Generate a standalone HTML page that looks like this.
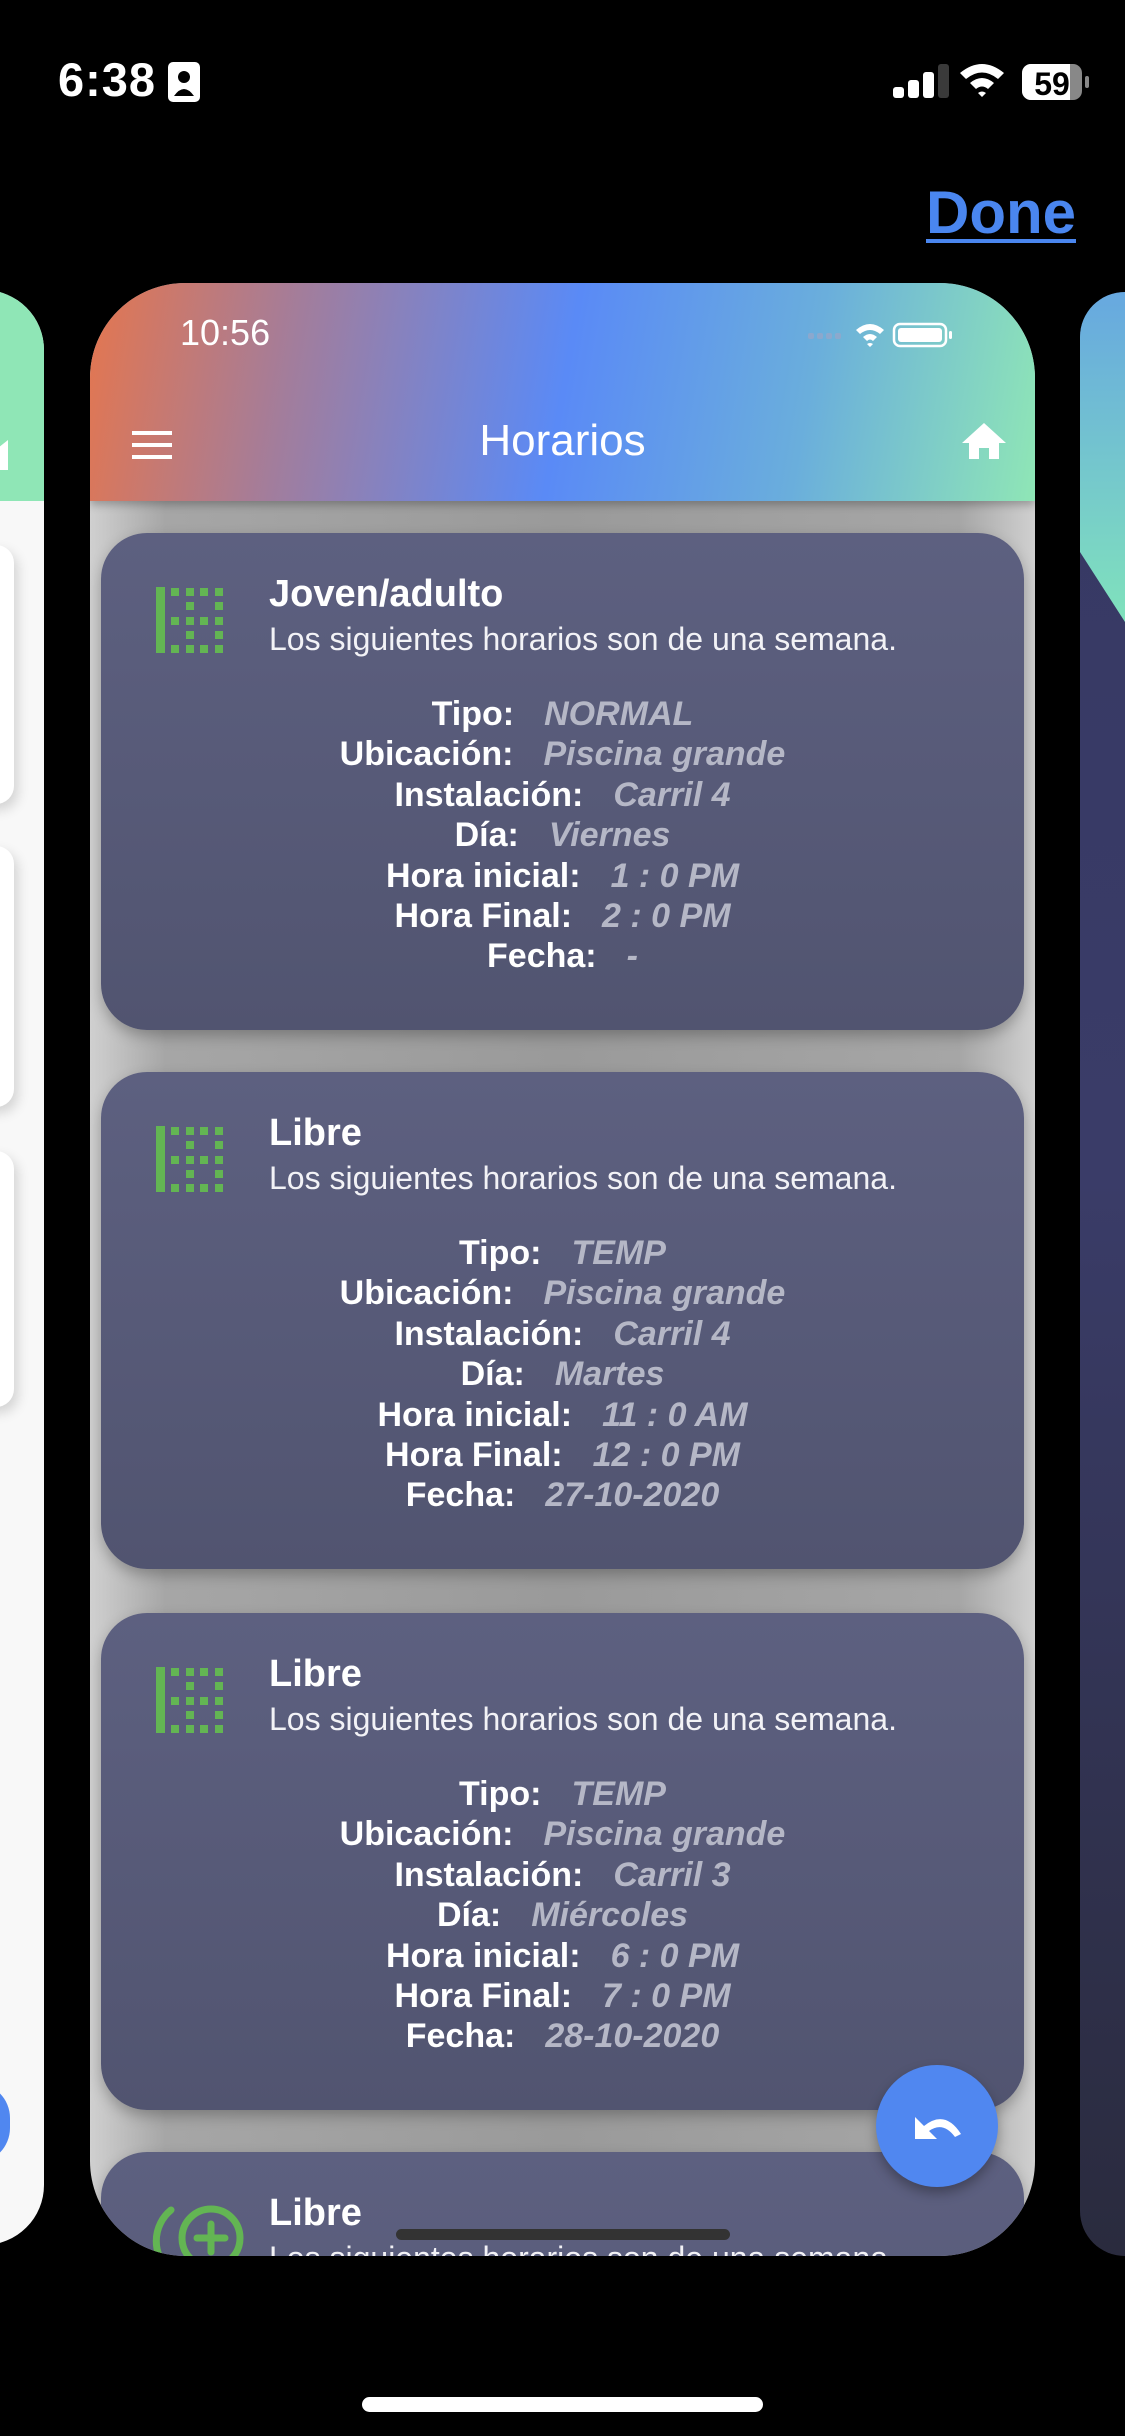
<!DOCTYPE html>
<html><head><meta charset="utf-8"><style>
*{margin:0;padding:0;box-sizing:border-box}
html{width:1125px;height:2436px;overflow:hidden}
body{width:1125px;height:2436px;background:#000;position:relative;overflow:hidden;font-family:"Liberation Sans",sans-serif;color:#fff}
.abs{position:absolute}
.main{left:90px;top:283px;width:945px;height:1973px;border-radius:95px;overflow:hidden;background:linear-gradient(90deg,#d0d0d0 0,#a6a6a6 8%,#9a9a9a 50%,#a6a6a6 92%,#d0d0d0 100%)}
.hdr{left:0;top:0;width:945px;height:218px;background:linear-gradient(100deg,#e4764f 0%,#a27d9c 22%,#5a8af6 50%,#6aaedc 75%,#8fe6b6 100%);box-shadow:0 4px 8px rgba(0,0,0,.25)}
.card{left:11px;width:923px;height:497px;border-radius:46px;background:linear-gradient(180deg,#5d6080,#515470);box-shadow:0 6px 14px rgba(0,0,0,.25)}
.title{left:168px;top:40px;font-size:38px;font-weight:bold}
.sub{left:168px;top:88px;font-size:32px;color:#f2f2f6}
.rows{left:0;top:161px;width:923px;text-align:center;font-size:34px;font-weight:bold;line-height:40.4px}
.rows i{color:#b5b7c6;margin-left:30px}
.icon{left:55px;top:54px}
</style></head><body>
<div class="abs" style="left:58px;top:52px;font-size:47px;font-weight:bold;letter-spacing:1px">6:38</div>
<svg class="abs" style="left:168px;top:62px" width="32" height="40"><rect x="0" y="0" width="32" height="40" rx="5" fill="#fff"/><circle cx="16" cy="15" r="6" fill="#000"/><path d="M6 34 Q16 20 26 34Z" fill="#000"/></svg>
<svg class="abs" style="left:890px;top:60px" width="200" height="50">
<rect x="3" y="27" width="11" height="11" rx="3" fill="#fff"/><rect x="18" y="20" width="11" height="18" rx="3" fill="#fff"/><rect x="33" y="12" width="11" height="26" rx="3" fill="#fff"/><rect x="48" y="4" width="11" height="34" rx="3" fill="#3a3a3a"/>
<path d="M70 13 Q92 -5 114 13 L108 19 Q92 6 76 19Z M80 23 Q92 13 104 23 L98 29 Q92 24 86 29Z M88 33 L92 37 L96 33 Q92 30 88 33Z" fill="#fff"/>
<rect x="132" y="4" width="60" height="36" rx="9" fill="#888"/><path d="M141 4 H180 V40 H141 A9 9 0 0 1 132 31 V13 A9 9 0 0 1 141 4Z" fill="#fff"/><rect x="195" y="16" width="4" height="12" rx="2" fill="#888"/>
<text x="162" y="35" font-size="32" font-weight="bold" font-family="Liberation Sans" text-anchor="middle" fill="#000">59</text></svg>
<div class="abs" style="left:926px;top:178px;font-size:60px;font-weight:bold;color:#4a86ef;text-decoration:underline;text-decoration-thickness:4px;text-underline-offset:6px">Done</div>

<div class="abs" style="left:-60px;top:290px;width:104px;height:1955px;border-radius:0 60px 60px 0;overflow:hidden;background:#f8f8f8">
<div class="abs" style="left:0;top:0;width:104px;height:211px;background:#8fe6b6"></div>
<svg class="abs" style="left:58px;top:150px" width="20" height="30"><path d="M0 8 L10 0 L10 30 L0 30Z" fill="#fff"/></svg>
<div class="abs" style="left:0;top:255px;width:74px;height:259px;background:#fff;border-radius:0 18px 18px 0;box-shadow:4px 6px 12px rgba(0,0,0,.15)"></div>
<div class="abs" style="left:0;top:556px;width:74px;height:261px;background:#fff;border-radius:0 18px 18px 0;box-shadow:4px 6px 12px rgba(0,0,0,.15)"></div>
<div class="abs" style="left:0;top:861px;width:74px;height:256px;background:#fff;border-radius:0 18px 18px 0;box-shadow:4px 6px 12px rgba(0,0,0,.15)"></div>
<div class="abs" style="left:0;top:1793px;width:70px;height:80px;border-radius:40px;background:#5087f0"></div>
</div>

<div class="abs" style="left:1080px;top:292px;width:45px;height:1964px;border-radius:60px 0 0 60px;overflow:hidden;background:linear-gradient(180deg,#363863 0%,#3a3c68 45%,#2a2b3e 100%)">
<svg class="abs" style="left:0;top:0" width="45" height="340"><defs><linearGradient id="tg" x1="0" y1="0" x2="0" y2="1"><stop offset="0" stop-color="#67a8e0"/><stop offset="1" stop-color="#80e2bc"/></linearGradient></defs><path d="M0 0 H45 V330 L0 260Z" fill="url(#tg)"/></svg>
</div>

<div class="abs main">
<div class="abs hdr"></div>
<div class="abs" style="left:90px;top:29px;font-size:36px">10:56</div>
<svg class="abs" style="left:718px;top:38px" width="180" height="30">
<g fill="#9aa6c8" opacity=".7"><rect x="0" y="12" width="6" height="6" rx="2"/><rect x="9" y="12" width="6" height="6" rx="2"/><rect x="18" y="12" width="6" height="6" rx="2"/><rect x="27" y="12" width="6" height="6" rx="2"/></g>
<path d="M48 9 Q62 -3 76 9 L72 13 Q62 5 52 13Z M55 16 Q62 10 69 16 L65 20 Q62 17 59 20Z M59 23 L62 26 L65 23 Q62 21 59 23Z" fill="#fff"/>
<rect x="86" y="3" width="52" height="22" rx="6" fill="none" stroke="#fff" stroke-width="2.5"/><rect x="90" y="7" width="44" height="14" rx="3" fill="#fff"/><rect x="141" y="10" width="3" height="8" rx="1.5" fill="#fff"/></svg>
<div class="abs" style="left:42px;top:148px;width:40px;height:4px;background:#fff;box-shadow:0 12px 0 #fff,0 24px 0 #fff"></div>
<div class="abs" style="left:0;top:133px;width:945px;text-align:center;font-size:44px">Horarios</div>
<svg class="abs" style="left:871px;top:138px" width="46" height="40"><path d="M23 2 L45 22 H38 V38 H28 V27 H18 V38 H8 V22 H1Z" fill="#fff"/></svg>

<div class="abs card" style="top:250px">
<svg class="abs icon" width="70" height="66"><g fill="#63b553"><rect x="0" y="0" width="9" height="66"/>
<rect x="15" y="1" width="8" height="8"/><rect x="30" y="1" width="8" height="8"/><rect x="44" y="1" width="8" height="8"/><rect x="59" y="1" width="8" height="8"/>
<rect x="30" y="15" width="8" height="8"/><rect x="59" y="15" width="8" height="8"/>
<rect x="15" y="30" width="8" height="8"/><rect x="30" y="30" width="8" height="8"/><rect x="44" y="30" width="8" height="8"/><rect x="59" y="30" width="8" height="8"/>
<rect x="30" y="44" width="8" height="8"/><rect x="59" y="44" width="8" height="8"/>
<rect x="15" y="58" width="8" height="8"/><rect x="30" y="58" width="8" height="8"/><rect x="44" y="58" width="8" height="8"/><rect x="59" y="58" width="8" height="8"/></g></svg>
<div class="abs title">Joven/adulto</div>
<div class="abs sub">Los siguientes horarios son de una semana.</div>
<div class="abs rows">
<div>Tipo:<i>NORMAL</i></div><div>Ubicación:<i>Piscina grande</i></div><div>Instalación:<i>Carril 4</i></div><div>Día:<i>Viernes</i></div><div>Hora inicial:<i>1 : 0 PM</i></div><div>Hora Final:<i>2 : 0 PM</i></div><div>Fecha:<i>-</i></div>
</div></div>

<div class="abs card" style="top:789px">
<svg class="abs icon" width="70" height="66"><g fill="#63b553"><rect x="0" y="0" width="9" height="66"/>
<rect x="15" y="1" width="8" height="8"/><rect x="30" y="1" width="8" height="8"/><rect x="44" y="1" width="8" height="8"/><rect x="59" y="1" width="8" height="8"/>
<rect x="30" y="15" width="8" height="8"/><rect x="59" y="15" width="8" height="8"/>
<rect x="15" y="30" width="8" height="8"/><rect x="30" y="30" width="8" height="8"/><rect x="44" y="30" width="8" height="8"/><rect x="59" y="30" width="8" height="8"/>
<rect x="30" y="44" width="8" height="8"/><rect x="59" y="44" width="8" height="8"/>
<rect x="15" y="58" width="8" height="8"/><rect x="30" y="58" width="8" height="8"/><rect x="44" y="58" width="8" height="8"/><rect x="59" y="58" width="8" height="8"/></g></svg>
<div class="abs title">Libre</div>
<div class="abs sub">Los siguientes horarios son de una semana.</div>
<div class="abs rows">
<div>Tipo:<i>TEMP</i></div><div>Ubicación:<i>Piscina grande</i></div><div>Instalación:<i>Carril 4</i></div><div>Día:<i>Martes</i></div><div>Hora inicial:<i>11 : 0 AM</i></div><div>Hora Final:<i>12 : 0 PM</i></div><div>Fecha:<i>27-10-2020</i></div>
</div></div>

<div class="abs card" style="top:1330px">
<svg class="abs icon" width="70" height="66"><g fill="#63b553"><rect x="0" y="0" width="9" height="66"/>
<rect x="15" y="1" width="8" height="8"/><rect x="30" y="1" width="8" height="8"/><rect x="44" y="1" width="8" height="8"/><rect x="59" y="1" width="8" height="8"/>
<rect x="30" y="15" width="8" height="8"/><rect x="59" y="15" width="8" height="8"/>
<rect x="15" y="30" width="8" height="8"/><rect x="30" y="30" width="8" height="8"/><rect x="44" y="30" width="8" height="8"/><rect x="59" y="30" width="8" height="8"/>
<rect x="30" y="44" width="8" height="8"/><rect x="59" y="44" width="8" height="8"/>
<rect x="15" y="58" width="8" height="8"/><rect x="30" y="58" width="8" height="8"/><rect x="44" y="58" width="8" height="8"/><rect x="59" y="58" width="8" height="8"/></g></svg>
<div class="abs title">Libre</div>
<div class="abs sub">Los siguientes horarios son de una semana.</div>
<div class="abs rows">
<div>Tipo:<i>TEMP</i></div><div>Ubicación:<i>Piscina grande</i></div><div>Instalación:<i>Carril 3</i></div><div>Día:<i>Miércoles</i></div><div>Hora inicial:<i>6 : 0 PM</i></div><div>Hora Final:<i>7 : 0 PM</i></div><div>Fecha:<i>28-10-2020</i></div>
</div></div>

<div class="abs card" style="top:1869px">
<svg class="abs" style="left:45px;top:50px" width="100" height="80"><circle cx="65" cy="36" r="29" fill="none" stroke="#63b553" stroke-width="7"/><path d="M25 8 A40 40 0 0 0 25 70" fill="none" stroke="#63b553" stroke-width="7" stroke-linecap="round"/><path d="M65 22 V50 M51 36 H79" stroke="#63b553" stroke-width="7" stroke-linecap="round"/></svg>
<div class="abs title">Libre</div>
<div class="abs sub">Los siguientes horarios son de una semana.</div>
</div>

<div class="abs" style="left:306px;top:1946px;width:334px;height:11px;border-radius:6px;background:#333"></div>
<div class="abs" style="left:786px;top:1782px;width:122px;height:122px;border-radius:61px;background:#5087f0;box-shadow:0 6px 12px rgba(0,0,0,.3)"></div>
<svg class="abs" style="left:823px;top:1826px" width="50" height="36"><path d="M2 8 V30 H24 L16 22 Q30 12 42 28 L48 25 Q32 0 11 17Z" fill="#fff"/></svg>
</div>

<div class="abs" style="left:362px;top:2397px;width:401px;height:15px;border-radius:8px;background:#fff"></div>
</body></html>
